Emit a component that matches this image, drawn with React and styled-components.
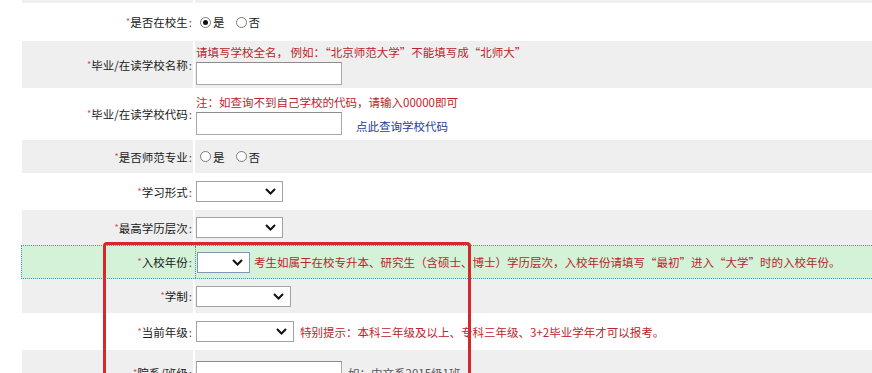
import React from "react";
import styled, { createGlobalStyle } from "styled-components";

const GlobalStyle = createGlobalStyle`
  html, body {
    margin: 0;
    padding: 0;
    background: #fff;
    overflow: hidden;
  }
  body {
    font-family: "Noto Sans CJK SC", "Liberation Sans", sans-serif;
    font-size: 11.5px;
    color: #1a1a1a;
  }
`;

const tones = {
  gray: "#efefef",
  white: "#ffffff",
  green: "#d3f2d8",
};

const Page = styled.div`
  position: relative;
  width: 872px;
  height: 373px;
  overflow: hidden;
`;

const Form = styled.div`
  display: flex;
  flex-direction: column;
  padding-left: 22px;
`;

const Row = styled.div`
  display: grid;
  grid-template-columns: 171px 1fr;
  column-gap: 2px;
  height: ${(p) => p.$h}px;
  box-sizing: border-box;
  flex-shrink: 0;
  background: ${(p) => (p.$tone === "green" ? tones.green : "#fff")};
  ${(p) =>
    p.$tone === "green" &&
    `
    margin-left: -1px;
    border: 1px dotted #4a8fb0;
    border-right: none;
  `}
`;

const Label = styled.div`
  display: flex;
  align-items: center;
  justify-content: flex-end;
  padding-right: 1px;
  background: ${(p) => tones[p.$tone]};
  white-space: nowrap;
`;

const Star = styled.span`
  color: #e04a4f;
  font-size: 9px;
  vertical-align: 2px;
`;

const Colon = styled.span`
  color: #555;
  margin-left: 1px;
`;

const Value = styled.div`
  display: flex;
  flex-direction: ${(p) => (p.$stack ? "column" : "row")};
  justify-content: ${(p) => (p.$stack ? "center" : "flex-start")};
  align-items: ${(p) => (p.$stack ? "flex-start" : "center")};
  gap: ${(p) => (p.$stack ? 2 : 0)}px;
  padding-left: 1px;
  background: ${(p) => tones[p.$tone]};
  white-space: nowrap;
  ${(p) => p.$tone === "green" && `border-left: 1px dotted #4a8fb0;`}
`;

const Hint = styled.span`
  color: #b9252b;
  line-height: 16px;
  margin-left: ${(p) => p.$gap || 0}px;
`;

const LineWrap = styled.div`
  display: flex;
  align-items: flex-end;
`;

const TextInput = styled.div`
  width: 146px;
  height: 23px;
  box-sizing: border-box;
  background: #fff;
  border: 1px solid #a9a9a9;
  border-top-color: #8c8c8c;
`;

const Link = styled.span`
  color: #1d3c98;
  margin-left: 14px;
  line-height: 16px;
  padding-bottom: 1px;
`;

const Note = styled.span`
  color: #555;
  margin-left: 6px;
`;

const RadioGroup = styled.div`
  display: flex;
  align-items: center;
  margin-left: 4px;
`;

const RadioItem = styled.span`
  display: inline-flex;
  align-items: center;
  margin-right: 11px;
`;

const RadioDot = styled.span`
  width: 11px;
  height: 11px;
  box-sizing: border-box;
  border-radius: 50%;
  border: 1px solid #7a7a7a;
  background: #fff;
  display: inline-flex;
  align-items: center;
  justify-content: center;
  margin-right: 2px;
  &::after {
    content: "";
    width: 5px;
    height: 5px;
    border-radius: 50%;
    background: ${(p) => (p.$on ? "#111" : "transparent")};
  }
`;

const SelectBox = styled.div`
  width: ${(p) => p.$w}px;
  height: 21px;
  box-sizing: border-box;
  background: #fff;
  border: 1px solid ${(p) => (p.$focus ? "#7d9bb5" : "#a3a3a3")};
  display: flex;
  align-items: center;
  justify-content: flex-end;
  padding-right: 6px;
`;

const Chevron = () => (
  <svg width="11" height="7" viewBox="0 0 11 7">
    <path d="M1 1 L5.5 5.5 L10 1" fill="none" stroke="#111" strokeWidth="2" />
  </svg>
);

const Select = ({ w, focus }) => (
  <SelectBox $w={w} $focus={focus}>
    <Chevron />
  </SelectBox>
);

const Radios = ({ checked }) => (
  <RadioGroup>
    <RadioItem>
      <RadioDot $on={checked === "yes"} />是
    </RadioItem>
    <RadioItem>
      <RadioDot $on={checked === "no"} />否
    </RadioItem>
  </RadioGroup>
);

const RedFrame = styled.div`
  position: absolute;
  left: 103px;
  top: 242px;
  width: 368px;
  height: 200px;
  box-sizing: border-box;
  border: 3px solid #d6282c;
  border-radius: 4px;
  pointer-events: none;
`;

const Field = ({ tone, h, label, stack, children }) => (
  <Row $tone={tone} $h={h}>
    <Label $tone={tone}>
      {label && (
        <span>
          <Star>*</Star>
          {label}
          <Colon>:</Colon>
        </span>
      )}
    </Label>
    <Value $tone={tone} $stack={stack}>
      {children}
    </Value>
  </Row>
);

export default function App() {
  return (
    <Page>
      <GlobalStyle />
      <Form>
        <Field tone="gray" h={3} />
        <Field tone="white" h={38} label="是否在校生">
          <Radios checked="yes" />
        </Field>
        <Field tone="gray" h={47} label="毕业/在读学校名称" stack>
          <Hint>请填写学校全名， 例如：“北京师范大学”不能填写成“北师大”</Hint>
          <TextInput />
        </Field>
        <Field tone="white" h={52} label="毕业/在读学校代码" stack>
          <Hint>注：如查询不到自己学校的代码，请输入00000即可</Hint>
          <LineWrap>
            <TextInput />
            <Link>点此查询学校代码</Link>
          </LineWrap>
        </Field>
        <Field tone="gray" h={33} label="是否师范专业">
          <Radios />
        </Field>
        <Field tone="white" h={37} label="学习形式">
          <Select w={87} />
        </Field>
        <Field tone="gray" h={35} label="最高学历层次">
          <Select w={87} />
        </Field>
        <Field tone="green" h={34} label="入校年份">
          <Select w={53} focus />
          <Hint $gap={4}>
            考生如属于在校专升本、研究生（含硕士、博士）学历层次，入校年份请填写“最初”进入“大学”时的入校年份。
          </Hint>
        </Field>
        <Field tone="gray" h={34} label="学制">
          <Select w={95} />
        </Field>
        <Field tone="white" h={37} label="当前年级">
          <Select w={98} />
          <Hint $gap={6}>特别提示：本科三年级及以上、专科三年级、3+2毕业学年才可以报考。</Hint>
        </Field>
        <Field tone="gray" h={45} label="院系/班级">
          <TextInput />
          <Note>如：中文系2015级1班</Note>
        </Field>
      </Form>
      <RedFrame />
    </Page>
  );
}
